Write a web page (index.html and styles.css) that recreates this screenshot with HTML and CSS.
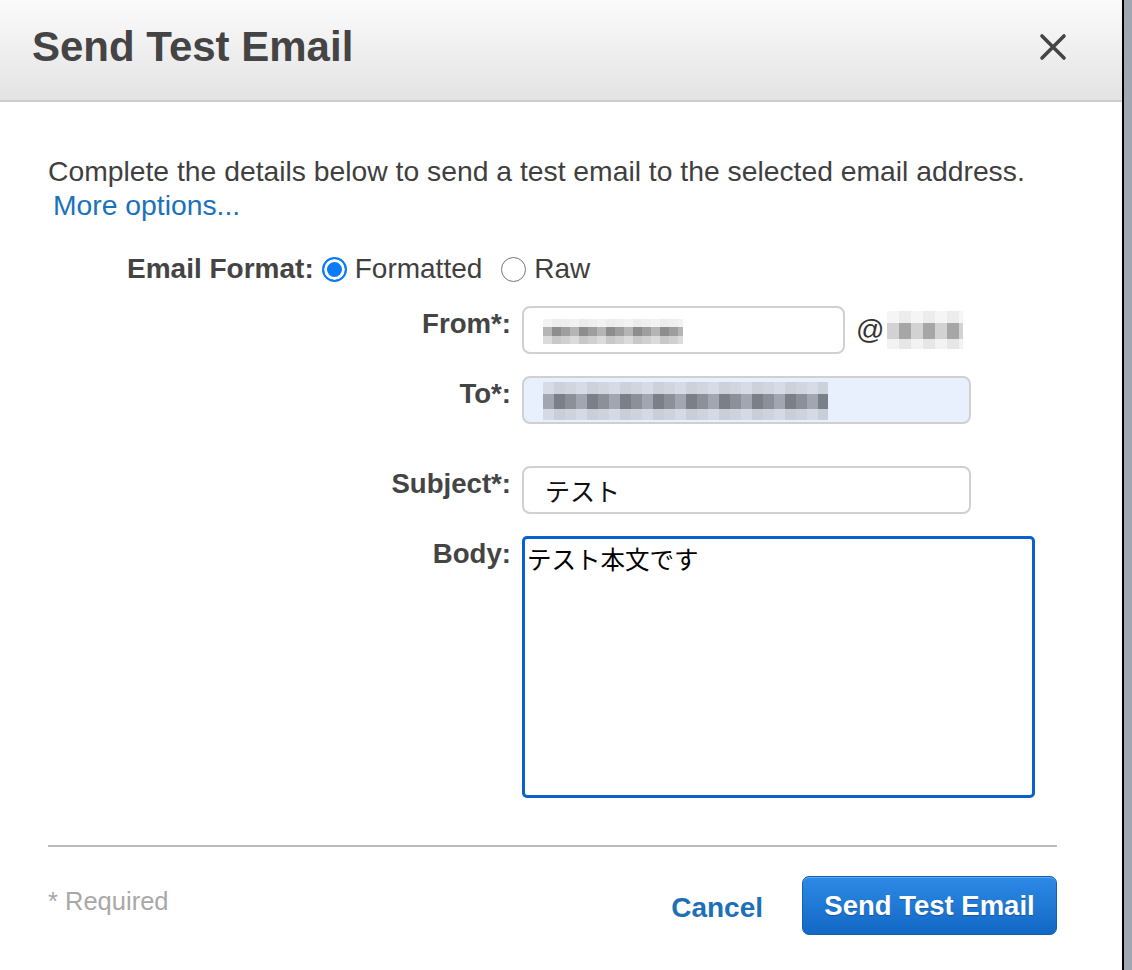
FILE: index.html
```html
<!DOCTYPE html>
<html lang="en">
<head>
    <meta charset="UTF-8">
    <meta name="viewport" content="width=device-width, initial-scale=1.0">
    <title>Send Test Email</title>
    <link rel="stylesheet" href="styles.css">
</head>
<body>
    <div class="dialog">
        <div class="dialog-header">
            <h1 class="dialog-title">Send Test Email</h1>
            <button class="close-btn" aria-label="Close">
                <svg width="28" height="28" viewBox="0 0 28 28">
                    <path d="M3 3 L25 25 M25 3 L3 25" stroke="#444" stroke-width="3.6" stroke-linecap="round"/>
                </svg>
            </button>
        </div>

        <div class="dialog-body">
            <p class="intro">
                Complete the details below to send a test email to the selected email address.<br>
                <a href="#" class="more-link">More options...</a>
            </p>

            <div class="format-row">
                <span class="format-label">Email Format:</span>
                <label class="radio-option">
                    <span class="radio checked"></span>Formatted
                </label>
                <label class="radio-option">
                    <span class="radio"></span>Raw
                </label>
            </div>

            <div class="fields">
                <div class="field-label">From*:</div>
                <div class="field-control">
                    <div class="text-box from-box">
                        <span class="mosaic mosaic-from"></span>
                    </div>
                    <span class="domain">@<span class="mosaic mosaic-domain"></span></span>
                </div>

                <div class="field-label gap-after">To*:</div>
                <div class="field-control gap-after">
                    <div class="text-box to-box">
                        <span class="mosaic mosaic-to"></span>
                    </div>
                </div>

                <div class="field-label">Subject*:</div>
                <div class="field-control">
                    <input class="text-box subject-box" type="text" value="テスト">
                </div>

                <div class="field-label">Body:</div>
                <div class="field-control">
                    <textarea class="body-box">テスト本文です</textarea>
                </div>
            </div>

            <div class="dialog-footer">
                <span class="required-note">* Required</span>
                <div class="footer-actions">
                    <a href="#" class="cancel-link">Cancel</a>
                    <button class="primary-btn">Send Test Email</button>
                </div>
            </div>
        </div>
    </div>
</body>
</html>
```

FILE: styles.css
```css
body {
    margin: 0;
    background-color: #a0a7af;
    font-family: "Liberation Sans", Arial, "Noto Sans CJK JP", sans-serif;
    color: #444;
}
.dialog {
    width: 1122px;
    min-height: 970px;
    background-color: #fff;
    border-right: 2px solid #000;
}
.dialog-header {
    box-sizing: border-box;
    height: 102px;
    display: flex;
    align-items: center;
    justify-content: space-between;
    padding: 0 55px 6px 32px;
    background: linear-gradient(#fbfbfb, #e3e3e3);
    border-bottom: 2px solid #cdcdcd;
}
.dialog-title {
    margin: 0;
    font-size: 42px;
    line-height: 1;
    font-weight: bold;
    color: #444;
}
.close-btn {
    border: 0;
    background: none;
    padding: 0;
    width: 28px;
    height: 28px;
    display: flex;
}
.dialog-body {
    padding: 0 65px 0 48px;
}
.intro {
    margin: 52px 0 0;
    font-size: 28.3px;
    line-height: 34px;
    color: #3f3f3f;
}
.more-link {
    margin-left: 5px;
    color: #1a72bb;
    text-decoration: none;
}
.format-row {
    display: flex;
    align-items: center;
    margin-top: 30px;
    padding-left: 79px;
    font-size: 28px;
    line-height: 34px;
}
.format-label {
    font-weight: bold;
    margin-right: 8px;
}
.radio-option {
    display: flex;
    align-items: center;
    margin-right: 19px;
    color: #3f3f3f;
}
.radio {
    box-sizing: border-box;
    width: 25px;
    height: 25px;
    border-radius: 50%;
    border: 1.5px solid #767676;
    background-color: #fff;
    margin-right: 8px;
}
.radio.checked {
    border: 2.5px solid #0a7bf5;
    background-color: #0a7bf5;
    box-shadow: inset 0 0 0 3px #fff;
}
.fields {
    display: grid;
    grid-template-columns: 463px auto;
    column-gap: 11px;
    row-gap: 22px;
    margin-top: 20px;
}
.field-label {
    text-align: right;
    font-size: 27.6px;
    font-weight: bold;
    line-height: 34px;
    padding-top: 1px;
}
.gap-after {
    margin-bottom: 20px;
}
.field-control {
    display: flex;
    align-items: center;
}
.text-box {
    box-sizing: border-box;
    height: 48px;
    width: 449px;
    border: 2px solid #d0d0d0;
    border-radius: 8px;
    background-color: #fff;
    display: flex;
    align-items: center;
    padding: 0 0 0 19px;
}
.from-box {
    width: 323px;
}
.to-box {
    background-color: #e8f0fe;
}
.subject-box {
    font-family: "Liberation Sans", Arial, "Noto Sans CJK JP", sans-serif;
    font-size: 25px;
    color: #111;
    padding-left: 21px;
    outline: none;
}
.domain {
    display: flex;
    align-items: center;
    margin-left: 11px;
    font-size: 28px;
    color: #333;
}
.mosaic {
    display: inline-block;
    filter: blur(0.6px);
}
.mosaic-from {
    width: 140px;
    height: 25px;
    margin-top: 2px;
    background:
        repeating-linear-gradient(90deg, rgba(255,255,255,0.35) 0 9px, transparent 9px 18px, rgba(255,255,255,0.15) 18px 27px),
        linear-gradient(#ececec 0 8px, #8d8d8d 8px 17px, #c8c8c8 17px 25px);
}
.mosaic-to {
    width: 285px;
    height: 38px;
    margin-top: 2px;
    background:
        repeating-linear-gradient(90deg, rgba(232,240,254,0.35) 0 11px, transparent 11px 22px, rgba(232,240,254,0.15) 22px 33px),
        linear-gradient(#ccd1da 0 12px, #7b7f87 12px 27px, #c9ced8 27px 38px);
}
.mosaic-domain {
    width: 76px;
    height: 38px;
    margin-left: 3px;
    background:
        repeating-linear-gradient(90deg, rgba(255,255,255,0.5) 0 12px, transparent 12px 24px),
        linear-gradient(#ececec 0 12px, #a6a6a6 12px 28px, #e6e6e6 28px 38px);
}
.body-box {
    box-sizing: border-box;
    width: 513px;
    height: 262px;
    border: 3px solid #0a60cf;
    border-radius: 5px;
    padding: 7px 2px;
    font-family: "Liberation Sans", Arial, "Noto Sans CJK JP", sans-serif;
    font-size: 24.5px;
    line-height: 30px;
    color: #000;
    resize: none;
    outline: none;
}
.dialog-footer {
    display: flex;
    justify-content: space-between;
    align-items: center;
    margin-top: 47px;
    padding-top: 29px;
    border-top: 2px solid #bcbcbc;
}
.required-note {
    font-size: 25.5px;
    color: #a8a8a8;
    margin-top: -8px;
}
.footer-actions {
    display: flex;
    align-items: center;
}
.cancel-link {
    font-size: 28px;
    font-weight: bold;
    color: #1d70b8;
    text-decoration: none;
    margin-right: 39px;
    margin-top: 4px;
}
.primary-btn {
    box-sizing: border-box;
    height: 59px;
    width: 255px;
    padding: 0;
    border: 1px solid #1560b5;
    border-radius: 7px;
    background: linear-gradient(#2d8ae6, #1268c4);
    box-shadow: inset 0 1px 0 rgba(255,255,255,0.25);
    color: #fff;
    font-family: "Liberation Sans", Arial, sans-serif;
    font-size: 27.5px;
    font-weight: bold;
    text-shadow: 0 1px 1px rgba(0,0,0,0.25);
}
```
